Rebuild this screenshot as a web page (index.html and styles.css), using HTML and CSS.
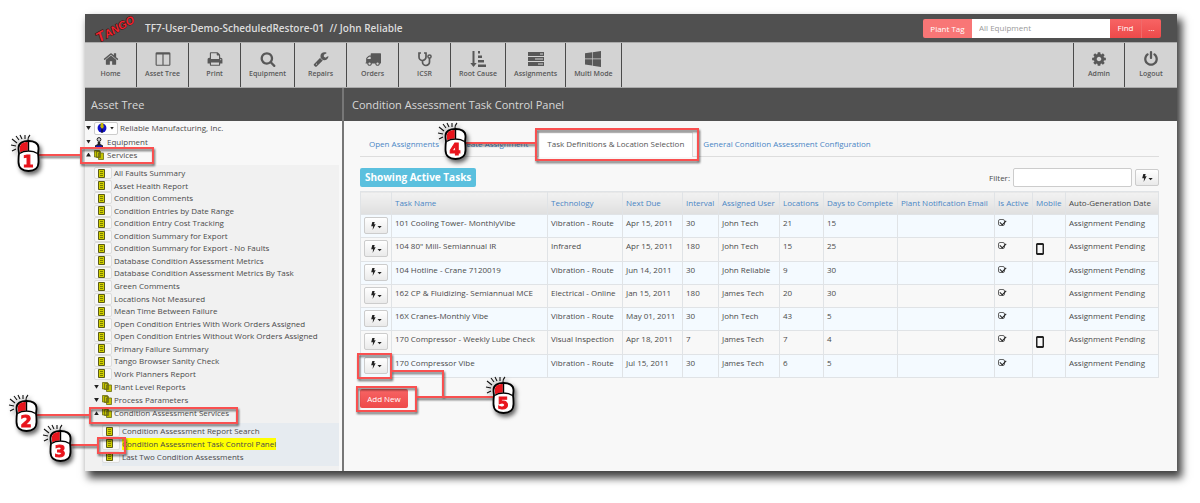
FILE: index.html
```html
<!DOCTYPE html>
<html lang="en">
<head>
<meta charset="utf-8">
<title>Condition Assessment Task Control Panel</title>
<link rel="stylesheet" href="styles.css">
</head>
<body>
<svg class="sprite" aria-hidden="true">
  <symbol id="home" viewBox="0 0 1792 1792"><path d="M1472 992v480q0 26-19 45t-45 19h-384v-384h-256v384h-384q-26 0-45-19t-19-45v-480q0-1 .5-3t.5-3l575-474 575 474q1 2 1 6zm223-69l-62 74q-8 9-21 11h-3q-13 0-21-7l-692-577-692 577q-12 8-24 7-13-2-21-11l-62-74q-8-10-7-23.500t11-21.500l719-599q32-26 76-26t76 26l244 204v-195q0-14 9-23t23-9h192q14 0 23 9t9 23v408l219 182q10 8 11 21.500t-7 23.500z"/></symbol>
  <symbol id="columns" viewBox="0 0 1792 1792"><path d="M224 1536h608v-1152h-640v1120q0 13 9.500 22.500t22.500 9.500zm1376-32v-1120h-640v1152h608q13 0 22.500-9.500t9.500-22.500zm128-1216v1216q0 66-47 113t-113 47h-1344q-66 0-113-47t-47-113v-1216q0-66 47-113t113-47h1344q66 0 113 47t47 113z"/></symbol>
  <symbol id="print" viewBox="0 0 1792 1792"><path d="M448 1536h896v-256h-896v256zm0-640h896v-384h-160q-40 0-68-28t-28-68v-160h-640v640zm1152 64q0-26-19-45t-45-19-45 19-19 45 19 45 45 19 45-19 19-45zm128 0v416q0 13-9.500 22.500t-22.500 9.500h-224v160q0 40-28 68t-68 28h-960q-40 0-68-28t-28-68v-160h-224q-13 0-22.500-9.500t-9.500-22.500v-416q0-79 56.500-135.500t135.500-56.500h64v-544q0-40 28-68t68-28h672q40 0 88 20t76 48l152 152q28 28 48 76t20 88v256h64q79 0 135.500 56.500t56.500 135.500z"/></symbol>
  <symbol id="search" viewBox="0 0 1792 1792"><path d="M1216 832q0-185-131.500-316.500t-316.500-131.500-316.500 131.500-131.500 316.500 131.500 316.500 316.500 131.500 316.500-131.500 131.500-316.500zm512 832q0 52-38 90t-90 38q-54 0-90-38l-343-342q-179 124-399 124-143 0-273.500-55.500t-225-150-150-225-55.500-273.500 55.500-273.500 150-225 225-150 273.500-55.500 273.500 55.500 225 150 150 225 55.500 273.500q0 220-124 399l343 343q37 37 37 90z"/></symbol>
  <symbol id="wrench" viewBox="0 0 1792 1792"><path d="M448 1472q0-26-19-45t-45-19-45 19-19 45 19 45 45 19 45-19 19-45zm644-420l-682 682q-37 37-90 37-52 0-91-37l-106-108q-38-36-38-90 0-53 38-91l681-681q39 98 114.500 173.500t173.500 114.500zm634-435q0 39-23 106-47 134-164.500 217.500t-258.500 83.500q-185 0-316.500-131.500t-131.500-316.500 131.500-316.500 316.500-131.500q58 0 121.500 16.500t107.500 46.500q16 11 16 28t-16 28l-293 169v224l193 107q5-3 79-48.500t135.500-81 70.500-35.500q15 0 23.500 10t8.500 25z"/></symbol>
  <symbol id="truck" viewBox="0 0 1792 1792"><path d="M640 1408q0-52-38-90t-90-38-90 38-38 90 38 90 90 38 90-38 38-90zm-384-512h384v-256h-158q-13 0-22 9l-195 195q-9 9-9 22v30zm1280 512q0-52-38-90t-90-38-90 38-38 90 38 90 90 38 90-38 38-90zm256-1088v1024q0 15-4 26.500t-13.500 18.500-16.500 11.500-23.500 6-22.500 2-25.500 0-22.500-.5q0 106-75 181t-181 75-181-75-75-181h-384q0 106-75 181t-181 75-181-75-75-181h-64q-3 0-22.500.5t-25.500 0-22.500-2-23.500-6-16.500-11.500-13.500-18.500-4-26.500q0-26 19-45t45-19v-320q0-8-.5-35t0-38 2.500-34.500 6.500-37 14-30.500 22.500-30l198-198q19-19 50.500-32t58.500-13h160v-192q0-26 19-45t45-19h1024q26 0 45 19t19 45z"/></symbol>
  <symbol id="stethoscope" viewBox="0 0 16 16"><path d="M4 2H2v4a3.500 3.500 0 0 0 7 0V2H7M5.500 9.500V11a3.500 3.500 0 0 0 7 0V7" fill="none" stroke="currentColor" stroke-width="1.700"/><circle cx="12.500" cy="5.500" r="1.600" fill="none" stroke="currentColor" stroke-width="1.500"/></symbol>
  <symbol id="sort" viewBox="0 0 16 16"><path d="M2.500 0h2v12h2.200l-3.200 4-3.200-4h2.200zM8 0h2v2.500H8zM8 4.500h4V7H8zM8 9h6v2.500H8zM8 13.500h8V16H8z"/></symbol>
  <symbol id="tasks" viewBox="0 0 16 14"><path fill-rule="evenodd" d="M0 0h16v4H0zM12 1.500v1h3v-1zM0 5h16v4H0zM7 6.500v1h8v-1zM0 10h16v4H0zM10 11.500v1h5v-1z"/></symbol>
  <symbol id="windows" viewBox="0 0 16 16"><path d="M0 2.300l7-1v6.300H0zM7.600 1.200L16 0v7.600H7.600zM0 8.300h7v6.300l-7-1zM7.600 8.300H16V16l-8.400-1.300z"/></symbol>
  <symbol id="cog" viewBox="0 0 1792 1792"><path d="M1152 896q0-106-75-181t-181-75-181 75-75 181 75 181 181 75 181-75 75-181zm512-109v222q0 12-8 23t-20 13l-185 28q-19 54-39 91 35 50 107 138 10 12 10 25t-9 23q-27 37-99 108t-94 71q-12 0-26-9l-138-108q-44 23-91 38-16 136-29 186-7 28-36 28h-222q-14 0-24.500-8.500t-11.500-21.500l-28-184q-49-16-90-37l-141 107q-10 9-25 9-14 0-25-11-126-114-165-168-7-10-7-23 0-12 8-23 15-21 51-66.500t54-70.500q-27-50-41-99l-183-27q-13-2-21-12.500t-8-23.500v-222q0-12 8-23t19-13l186-28q14-46 39-92-40-57-107-138-10-12-10-24 0-10 9-23 26-36 98.500-107.500t94.500-71.500q13 0 26 10l138 107q44-23 91-38 16-136 29-186 7-28 36-28h222q14 0 24.500 8.500t11.500 21.500l28 184q49 16 90 37l142-107q9-9 24-9 13 0 25 10 129 119 165 170 7 8 7 22 0 12-8 23-15 21-51 66.500t-54 70.500q26 50 41 98l183 28q13 2 21 12.500t8 23.500z"/></symbol>
  <symbol id="power" viewBox="0 0 1792 1792"><path d="M1664 896q0 156-61 298t-164 245-245 164-298 61-298-61-245-164-164-245-61-298q0-182 80.500-343t226.500-270q43-32 95.500-25t83.500 50q32 42 24.500 94.500t-49.500 84.500q-98 74-151.500 181t-53.500 228q0 104 40.500 198.500t109.500 163.500 163.500 109.500 198.500 40.500 198.500-40.500 163.500-109.500 109.500-163.500 40.500-198.500q0-121-53.500-228t-151.500-181q-42-32-49.500-84.500t24.500-94.500q31-43 84-50t95 25q146 109 226.500 270t80.500 343zm-640-768v640q0 52-38 90t-90 38-90-38-38-90v-640q0-52 38-90t90-38 90 38 38 90z"/></symbol>
  <symbol id="bolt" viewBox="0 0 12 8"><path d="M2.300 0h2.400L4 2.200h1.700L2.600 8l.5-3.700H1.200zM7.500 4h4.200L9.600 6.200z"/></symbol>
  <symbol id="page" viewBox="0 0 7 9"><path d="M.5.500h6v8h-6z" fill="#d0d000" stroke="#5b5b18"/><path d="M2 2.500h3M2 4.500h3M2 6.500h3" stroke="#666600" stroke-width=".8"/></symbol>
  <symbol id="pages" viewBox="0 0 10 10"><path d="M.5.500h5v6.500h-5zM2.500 1.500h4v6h-4zM4.500 3h5v6.500h-5z" fill="#c4c400" stroke="#6b6b14" stroke-width=".8"/></symbol>
  <symbol id="globe" viewBox="0 0 9 9"><circle cx="4.500" cy="4.500" r="4" fill="#1111c8"/><path d="M3.500 0h2L6 3 5.500 5H4L3 3z" fill="#c5b800"/><path d="M4 5h1v4H4z" fill="#111"/></symbol>
  <symbol id="person" viewBox="0 0 8 10"><circle cx="4" cy="2.500" r="1.900" fill="#ccc" stroke="#222"/><path d="M2.700 5h2.600v2L8 8.500V10H0V8.500L2.700 7z" fill="#222"/><path d="M1 8.600h6V10H1z" fill="#1616b8"/></symbol>
  <symbol id="phone" viewBox="0 0 8 12"><path fill-rule="evenodd" d="M1 0h6l1 1v10l-1 1H1l-1-1V1zM1.500 2v8h5V2z"/></symbol>
  <symbol id="mouse" viewBox="-8 -8 34 44">
    <path d="M10 0C10-3 11-4 12-5M-1 3l-5-4M1 0l-3-4M4-1L2-5M7-1V-5M-2 6l-5-1M-2 9l-4 2" fill="none" stroke="#111" stroke-width="1.100"/>
    <path d="M10.500 1C16 1 20.500 3 20.500 8c0 3-.5 4-.5 6 .5 2 .5 4 .5 8 0 6-4 9-10 9s-10-3-10-9c0-4 0-6 .5-8 0-2-.5-3-.5-6C.5 3 5 1 10.500 1z" fill="#fff" stroke="#000" stroke-width="1.800"/>
    <path d="M9.800 2C5 2 1.800 4 1.800 8q0 2 .5 4.500 3-1.800 7.500-2z" fill="#e8141c"/>
    <path d="M1.500 13.500Q5 11 10.500 11t9 2.500M10.500 0v10.500" fill="none" stroke="#000" stroke-width="1.400"/>
  </symbol>
</svg>

<div class="app">
  <header class="topbar">
    <svg class="logo" viewBox="0 0 44 28" role="img" aria-label="Tango"><g transform="rotate(-30 22 14)"><text class="logo-text" x="1" y="19"><tspan class="logo-cap">T</tspan>ANGO</text></g></svg>
    <h1 class="site">TF7-User-Demo-ScheduledRestore-01 &nbsp;// John Reliable</h1>
    <form class="finder">
      <label class="tag" for="find">Plant Tag</label>
      <input class="find-input" id="find" type="text" placeholder="All Equipment">
      <button class="find-btn" type="button">Find</button>
      <button class="find-btn more" type="button">...</button>
    </form>
  </header>
  <nav class="toolbar">
    <button class="tool"><svg><use href="#home"/></svg>Home</button>
    <button class="tool"><svg><use href="#columns"/></svg>Asset Tree</button>
    <button class="tool"><svg><use href="#print"/></svg>Print</button>
    <button class="tool"><svg><use href="#search"/></svg>Equipment</button>
    <button class="tool"><svg><use href="#wrench"/></svg>Repairs</button>
    <button class="tool"><svg><use href="#truck"/></svg>Orders</button>
    <button class="tool"><svg><use href="#stethoscope"/></svg>ICSR</button>
    <button class="tool"><svg><use href="#sort"/></svg>Root Cause</button>
    <button class="tool"><svg><use href="#tasks"/></svg>Assignments</button>
    <button class="tool"><svg><use href="#windows"/></svg>Multi Mode</button>
    <span class="spacer"></span>
    <button class="tool"><svg><use href="#cog"/></svg>Admin</button>
    <button class="tool"><svg><use href="#power"/></svg>Logout</button>
  </nav>
  <div class="panels">
    <aside class="side">
      <h2 class="panel-title">Asset Tree</h2>
      <div class="tree">
        <ul class="nodes">
          <li><i class="caret"></i><button class="menu" aria-label="Company menu"><svg class="ico"><use href="#globe"/></svg><i class="caret small"></i></button>Reliable Manufacturing, Inc.</li>
          <li><i class="caret"></i><svg class="ico wide"><use href="#person"/></svg>Equipment</li>
          <li><i class="caret up"></i><svg class="ico wide"><use href="#pages"/></svg>Services</li>
        </ul>
        <div class="branch">
          <ul class="leaves">
            <li><button class="leaf" aria-label="Open"><svg><use href="#page"/></svg></button>All Faults Summary</li>
            <li><button class="leaf" aria-label="Open"><svg><use href="#page"/></svg></button>Asset Health Report</li>
            <li><button class="leaf" aria-label="Open"><svg><use href="#page"/></svg></button>Condition Comments</li>
            <li><button class="leaf" aria-label="Open"><svg><use href="#page"/></svg></button>Condition Entries by Date Range</li>
            <li><button class="leaf" aria-label="Open"><svg><use href="#page"/></svg></button>Condition Entry Cost Tracking</li>
            <li><button class="leaf" aria-label="Open"><svg><use href="#page"/></svg></button>Condition Summary for Export</li>
            <li><button class="leaf" aria-label="Open"><svg><use href="#page"/></svg></button>Condition Summary for Export - No Faults</li>
            <li><button class="leaf" aria-label="Open"><svg><use href="#page"/></svg></button>Database Condition Assessment Metrics</li>
            <li><button class="leaf" aria-label="Open"><svg><use href="#page"/></svg></button>Database Condition Assessment Metrics By Task</li>
            <li><button class="leaf" aria-label="Open"><svg><use href="#page"/></svg></button>Green Comments</li>
            <li><button class="leaf" aria-label="Open"><svg><use href="#page"/></svg></button>Locations Not Measured</li>
            <li><button class="leaf" aria-label="Open"><svg><use href="#page"/></svg></button>Mean Time Between Failure</li>
            <li><button class="leaf" aria-label="Open"><svg><use href="#page"/></svg></button>Open Condition Entries With Work Orders Assigned</li>
            <li><button class="leaf" aria-label="Open"><svg><use href="#page"/></svg></button>Open Condition Entries Without Work Orders Assigned</li>
            <li><button class="leaf" aria-label="Open"><svg><use href="#page"/></svg></button>Primary Failure Summary</li>
            <li><button class="leaf" aria-label="Open"><svg><use href="#page"/></svg></button>Tango Browser Sanity Check</li>
            <li><button class="leaf" aria-label="Open"><svg><use href="#page"/></svg></button>Work Planners Report</li>
          </ul>
          <ul class="nodes inner">
            <li><i class="caret"></i><svg class="ico"><use href="#pages"/></svg>Plant Level Reports</li>
            <li><i class="caret"></i><svg class="ico"><use href="#pages"/></svg>Process Parameters</li>
            <li><i class="caret up"></i><svg class="ico"><use href="#pages"/></svg>Condition Assessment Services</li>
          </ul>
          <ul class="leaves sub">
            <li><button class="leaf" aria-label="Open"><svg><use href="#page"/></svg></button>Condition Assessment Report Search</li>
            <li><button class="leaf" aria-label="Open"><svg><use href="#page"/></svg></button><mark>Condition Assessment Task Control Panel</mark></li>
            <li><button class="leaf" aria-label="Open"><svg><use href="#page"/></svg></button>Last Two Condition Assessments</li>
          </ul>
        </div>
      </div>
    </aside>
    <main class="main">
      <h2 class="panel-title">Condition Assessment Task Control Panel</h2>
      <div class="content">
        <nav class="tabs">
          <a href="#open">Open Assignments</a>
          <a href="#create">Create Assignment</a>
          <a href="#tasks-tab" class="active">Task Definitions &amp; Location Selection</a>
          <a href="#config">General Condition Assessment Configuration</a>
        </nav>
        <div class="bar">
          <strong class="badge">Showing Active Tasks</strong>
          <span class="spacer"></span>
          <label for="filter">Filter:</label>
          <input class="filter" id="filter" type="text">
          <button class="act" aria-label="Table actions"><svg><use href="#bolt"/></svg></button>
        </div>
        <table class="grid">
          <colgroup><col class="c-act"><col class="c-name"><col class="c-tech"><col class="c-due"><col class="c-int"><col class="c-user"><col class="c-loc"><col class="c-days"><col class="c-mail"><col class="c-on"><col class="c-mob"><col class="c-gen"></colgroup>
          <thead><tr><th></th><th>Task Name</th><th>Technology</th><th>Next Due</th><th>Interval</th><th>Assigned User</th><th>Locations</th><th>Days to Complete</th><th>Plant Notification Email</th><th>Is Active</th><th>Mobile</th><th class="plain">Auto-Generation Date</th></tr></thead>
          <tbody>
            <tr><td><button class="act" aria-label="Actions"><svg><use href="#bolt"/></svg></button></td><td>101 Cooling Tower- MonthlyVibe</td><td>Vibration - Route</td><td>Apr 15, 2011</td><td>30</td><td>John Tech</td><td>21</td><td>15</td><td></td><td><input type="checkbox" aria-label="Active" checked></td><td></td><td>Assignment Pending</td></tr>
            <tr><td><button class="act" aria-label="Actions"><svg><use href="#bolt"/></svg></button></td><td>104 80" Mill- Semiannual IR</td><td>Infrared</td><td>Apr 15, 2011</td><td>180</td><td>John Tech</td><td>15</td><td>25</td><td></td><td><input type="checkbox" aria-label="Active" checked></td><td><svg class="phone"><use href="#phone"/></svg></td><td>Assignment Pending</td></tr>
            <tr><td><button class="act" aria-label="Actions"><svg><use href="#bolt"/></svg></button></td><td>104 Hotline - Crane 7120019</td><td>Vibration - Route</td><td>Jun 14, 2011</td><td>30</td><td>John Reliable</td><td>9</td><td>30</td><td></td><td><input type="checkbox" aria-label="Active" checked></td><td></td><td>Assignment Pending</td></tr>
            <tr><td><button class="act" aria-label="Actions"><svg><use href="#bolt"/></svg></button></td><td>162 CP &amp; Fluidizing- Semiannual MCE</td><td>Electrical - Online</td><td>Jan 15, 2011</td><td>180</td><td>James Tech</td><td>20</td><td>30</td><td></td><td><input type="checkbox" aria-label="Active" checked></td><td></td><td>Assignment Pending</td></tr>
            <tr><td><button class="act" aria-label="Actions"><svg><use href="#bolt"/></svg></button></td><td>16X Cranes-Monthly Vibe</td><td>Vibration - Route</td><td>May 01, 2011</td><td>30</td><td>John Tech</td><td>43</td><td>5</td><td></td><td><input type="checkbox" aria-label="Active" checked></td><td></td><td>Assignment Pending</td></tr>
            <tr><td><button class="act" aria-label="Actions"><svg><use href="#bolt"/></svg></button></td><td>170 Compressor - Weekly Lube Check</td><td>Visual Inspection</td><td>Apr 18, 2011</td><td>7</td><td>James Tech</td><td>7</td><td>4</td><td></td><td><input type="checkbox" aria-label="Active" checked></td><td><svg class="phone"><use href="#phone"/></svg></td><td>Assignment Pending</td></tr>
            <tr><td><button class="act" aria-label="Actions"><svg><use href="#bolt"/></svg></button></td><td>170 Compressor Vibe</td><td>Vibration - Route</td><td>Jul 15, 2011</td><td>30</td><td>James Tech</td><td>6</td><td>5</td><td></td><td><input type="checkbox" aria-label="Active" checked></td><td></td><td>Assignment Pending</td></tr>
          </tbody>
        </table>
        <button class="add">Add New</button>
      </div>
    </main>
  </div>
</div>

<svg class="callouts" width="720" height="503" aria-hidden="true">
  <g class="marks">
    <path d="M39 155H81M81 148h72v15H81zM37 415H90M90 408h147v15H90zM71 445H98M98 438h27v15H98zM466 143H535M536 129h162v31H536zM358 354h33v24h-33zM357 387h59v24h-59zM391 371h52v26M416 397h78"/>
  </g>
  <g class="mice">
    <use href="#mouse" x="10" y="132" width="34" height="44"/><text x="28" y="167">1</text>
    <use href="#mouse" x="8" y="392" width="34" height="44"/><text x="26" y="427">2</text>
    <use href="#mouse" x="42" y="422" width="34" height="44"/><text x="60" y="457">3</text>
    <use href="#mouse" x="437" y="120" width="34" height="44"/><text x="455" y="155">4</text>
    <use href="#mouse" x="485" y="374" width="34" height="44"/><text x="503" y="409">5</text>
  </g>
</svg>
</body>
</html>
```
FILE: styles.css
```css
* { box-sizing: border-box; }
body {
  margin: 0;
  padding: 14px 23px 32px 85px;
  background: #fff;
  color: #4a4a4a;
  font: 8px/12px "Open Sans", "Noto Sans", sans-serif;
  position: relative;
}
button, input { font: inherit; color: inherit; margin: 0; padding: 0; }
ul { list-style: none; margin: 0; padding: 0; }
svg { fill: currentColor; flex: none; }
.sprite { display: none; }
.spacer { flex: 1; }

.app {
  display: flex;
  flex-direction: column;
  background: #f8f8f8;
  box-shadow: 4px 6px 8px 1px rgba(0, 0, 0, .75);
}

.topbar {
  display: flex;
  align-items: center;
  height: 28px;
  padding: 0 16px 0 8px;
  background: #505050;
}
.logo { width: 44px; height: 28px; overflow: visible; }
.logo-text { font: italic bold 11px "Liberation Sans", sans-serif; fill: #f0242e; paint-order: stroke; stroke: #301010; stroke-width: 1px; }
.logo-cap { font-size: 14px; }
.site { flex: 1; margin: 0 0 0 8px; font-size: 10px; font-weight: 600; color: #ddd; }
.finder { display: flex; height: 19px; color: #fff; border-radius: 2px; overflow: hidden; }
.tag { width: 49px; line-height: 19px; text-align: center; background: #f87676; }
.find-input { width: 138px; padding: 0 7px; border: 0; background: #fff; color: #555; }
.find-input::placeholder { color: #999; }
.find-btn { width: 31px; border: 0; background: linear-gradient(#f76464, #ee4a4a); }
.find-btn.more { width: 20px; border-left: 1px solid #f06a6a; }

.toolbar { display: flex; height: 46px; background: #d3d3d3; border-bottom: 1px solid #aaa; border-top: 1px solid #aaa; }
.tool {
  display: flex;
  flex-direction: column;
  align-items: center;
  gap: 1px;
  min-width: 52px;
  padding: 8px 8px 0;
  border: 0;
  border-right: 1px solid #4a4a4a;
  background: none;
  color: #585858;
  font-size: 7px;
  font-weight: 600;
}
.tool svg { width: 16px; height: 16px; }
.spacer + .tool { border-left: 1px solid #4a4a4a; }
.tool:last-child { border-right: 0; }

.panels { display: flex; min-height: 383px; }
.side { width: 259px; border-right: 2px solid #777; }
.main { flex: 1; min-width: 0; }
.panel-title {
  margin: 0;
  height: 33px;
  padding: 0 6px;
  background: #505050;
  color: #d8d8d8;
  font-size: 11px;
  font-weight: 400;
  line-height: 33px;
}
.main .panel-title { padding: 0 8px; }

.nodes { display: grid; height: 40px; }
.nodes li { display: flex; align-items: center; gap: 2px; }
.caret { width: 7px; height: 4px; background: #222; clip-path: polygon(15% 0, 85% 0, 50% 100%); }
.caret.up { clip-path: polygon(15% 100%, 85% 100%, 50% 0); }
.caret.small { width: 6px; height: 3px; }
.ico { width: 10px; height: 10px; }
.ico.wide { margin-right: 1px; }
.menu { display: flex; align-items: center; gap: 2px; height: 13px; padding: 0 2px; border: 1px solid #ccc; border-radius: 2px; background: #fff; }
.branch { margin-top: 4px; margin-right: 3px; padding: 2px 0 5px; background: #f1f1f1; }
.leaves { display: grid; height: 213px; padding-left: 9px; }
.leaves li { display: flex; align-items: center; gap: 2px; }
.leaf { display: flex; align-items: center; width: 18px; height: 12px; padding-left: 3px; border: 1px solid #ddd; border-radius: 2px; background: #f8f8f8; }
.leaf svg { width: 7px; height: 9px; }
.inner { padding-left: 8px; }
.sub { height: 43px; margin: 3px 0 0 17px; padding: 2px 0 3px 0; background: #e6ebf0; }
mark { background: #ff0; color: inherit; }

.content { padding: 11px 18px 0 16px; }
.tabs { display: flex; gap: 1px; border-bottom: 1px solid #ddd; }
.tabs a { height: 24px; padding: 0 9px; line-height: 24px; color: #4a86c5; text-decoration: none; }
.tabs .active { margin-bottom: -1px; height: 25px; padding: 0 8px; line-height: 22px; border: 1px solid #ddd; border-bottom: 0; background: #fff; color: #555; }
.bar { display: flex; align-items: center; gap: 3px; margin: 11px 0 4px; }
.badge { padding: 0 5px; border-radius: 2px; background: #5bc0de; color: #fff; font-size: 10px; line-height: 19px; }
.filter { width: 119px; height: 19px; padding: 0 4px; border: 1px solid #ccc; border-radius: 2px; background: #fff; }
.act { display: flex; align-items: center; justify-content: center; width: 24px; height: 17px; border: 1px solid #ccc; border-radius: 2px; background: linear-gradient(#fff, #eaeaea); color: #222; }
.act svg { width: 12px; height: 8px; }

.grid { width: 100%; height: 187px; table-layout: fixed; border-collapse: collapse; }
.grid th, .grid td { border: 1px solid #e0e3e6; text-align: left; padding: 0 0 0 3px; white-space: nowrap; }
.grid th { height: 23px; color: #4a86c5; font-weight: 500; background: linear-gradient(#f2f2f2, #dfdfdf); }
.grid th.plain { color: #444; }
.grid td { vertical-align: top; padding-top: 2px; }
.grid tbody tr:nth-child(odd) { background: #f4faff; }
.grid input { display: block; appearance: none; position: relative; width: 7px; height: 7px; margin-top: 2px; border: 1px solid #666; border-radius: 2px; }
.grid input:checked::after { content: ""; position: absolute; left: 1px; top: 0; width: 5px; height: 3px; border: solid #222; border-width: 0 0 1px 1px; transform: rotate(-45deg); }
.phone { display: block; width: 8px; height: 12px; margin-top: 3px; color: #222; }
.c-act { width: 31px; } .c-name { width: 156px; } .c-tech { width: 75px; } .c-due { width: 60px; }
.c-int { width: 36px; } .c-user { width: 61px; } .c-loc { width: 44px; } .c-days { width: 74px; }
.c-mail { width: 97px; } .c-on { width: 38px; } .c-mob { width: 33px; } .c-gen { width: 93px; }
.add { display: block; margin-top: 11px; width: 48px; height: 19px; border: 0; border-radius: 2px; background: linear-gradient(#f76464, #ee4a4a); color: #fff; }

.callouts { position: absolute; left: 0; top: 0; pointer-events: none; }
.marks { fill: none; stroke: #f95050; stroke-width: 2px; filter: drop-shadow(1px 2px 1px rgba(0, 0, 0, .6)); }
.mice { filter: drop-shadow(2px 3px 2px rgba(0, 0, 0, .6)); }
.mice text { font: bold 16px "DejaVu Sans", sans-serif; fill: #e8141c; stroke: #e8141c; stroke-width: 1px; text-anchor: middle; }
```
